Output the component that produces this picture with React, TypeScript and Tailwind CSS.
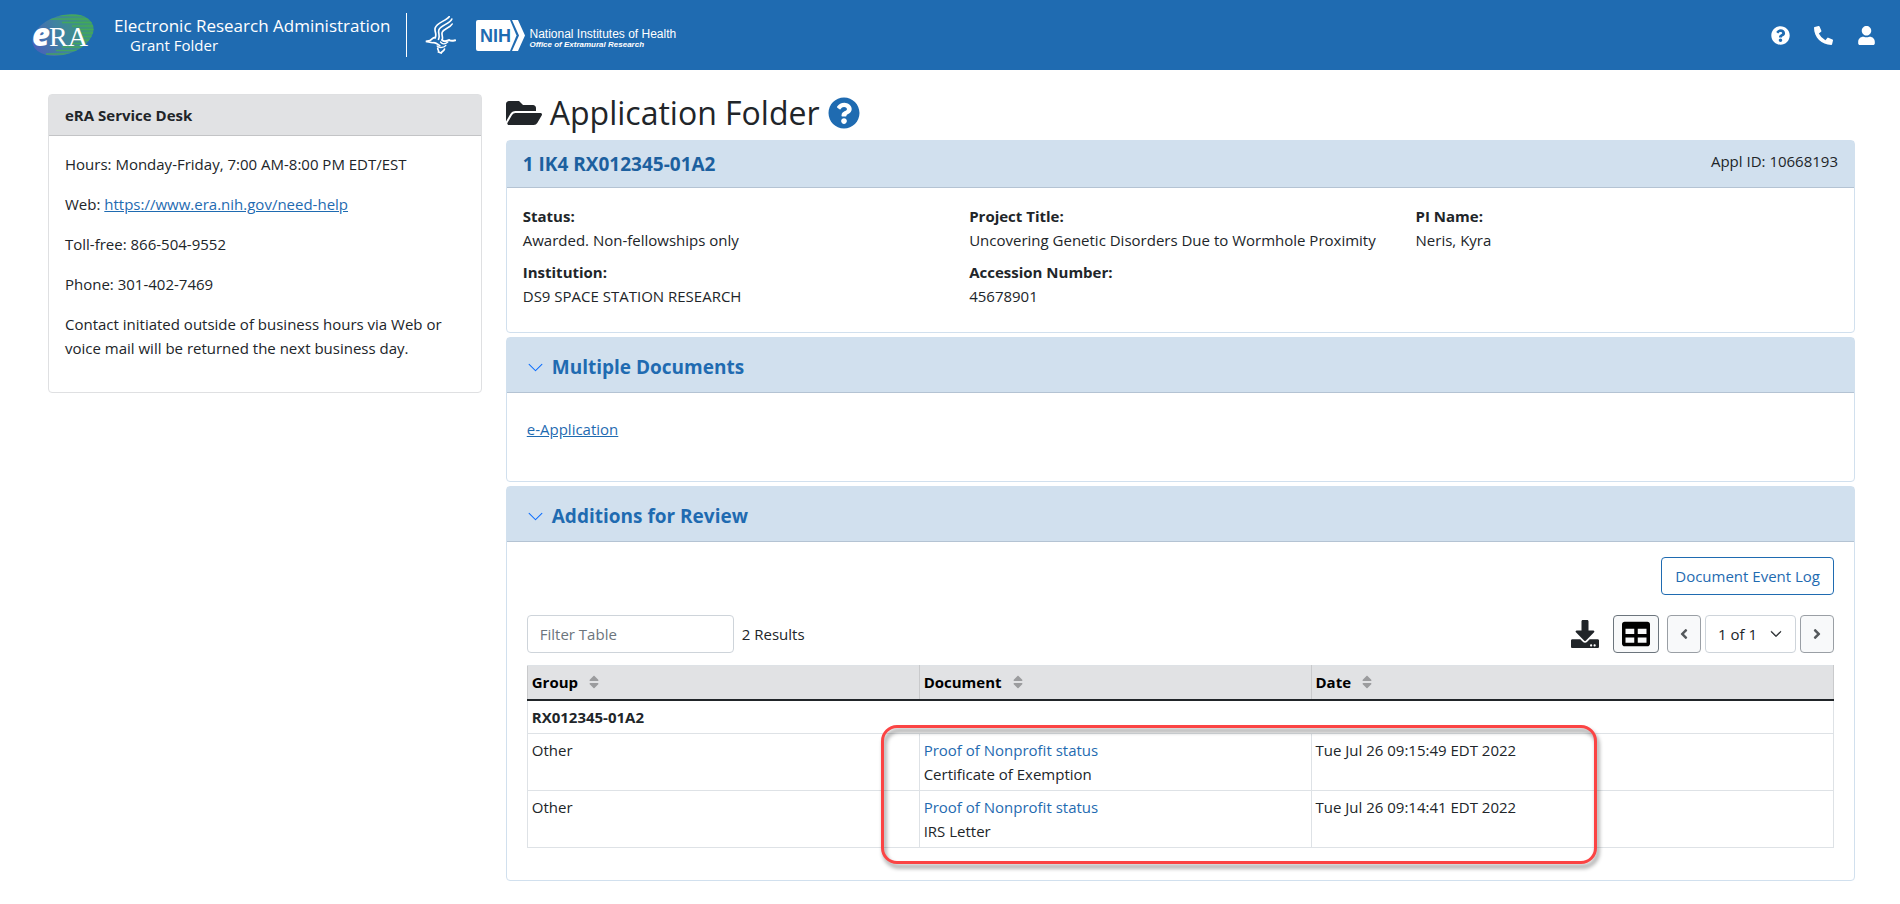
import { useState } from "react";
import type { ReactNode } from "react";
import {
  FaAngleLeft,
  FaAngleRight,
  FaDownload,
  FaFolderOpen,
  FaPhoneAlt,
  FaQuestionCircle,
  FaSort,
  FaTable,
  FaUser,
} from "react-icons/fa";
import { BsChevronDown } from "react-icons/bs";

const documents = [
  {
    group: "Other",
    document: "Proof of Nonprofit status",
    description: "Certificate of Exemption",
    date: "Tue Jul 26 09:15:49 EDT 2022",
  },
  {
    group: "Other",
    document: "Proof of Nonprofit status",
    description: "IRS Letter",
    date: "Tue Jul 26 09:14:41 EDT 2022",
  },
];

function EraLogo() {
  return (
    <svg viewBox="0 0 62 44" className="h-11 w-[62px]" role="img" aria-label="eRA">
      <defs>
        <linearGradient id="era-fill" x1="0" y1="0.6" x2="1" y2="0.3">
          <stop offset="0" stopColor="#4a62b8" />
          <stop offset="0.45" stopColor="#3f83a0" />
          <stop offset="1" stopColor="#3f9a70" />
        </linearGradient>
        <clipPath id="era-clip">
          <ellipse cx="31" cy="22" rx="31.500" ry="19.500" transform="rotate(-18 31 22)" />
        </clipPath>
      </defs>
      <g clipPath="url(#era-clip)">
        <rect width="62" height="44" fill="url(#era-fill)" />
        <path
          d="M20 2.500H62M18 6H62M30 9.500H62M40 13H62M44 16.500H62M48 20H62M48 23.500H62M46 27H62M40 30.500H62M30 34H56M24 37.500H50M14 41H44"
          stroke="#45b04e"
          strokeWidth="1.300"
          opacity="0.75"
        />
      </g>
      <text x="0" y="33" fill="#fff" fontSize="31" fontWeight="800" fontStyle="italic" fontFamily="'Open Sans', sans-serif">
        e
      </text>
      <text x="17" y="33" fill="#fff" fontSize="28" fontFamily="'Liberation Serif', serif">
        RA
      </text>
    </svg>
  );
}

function HhsLogo() {
  return (
    <svg viewBox="76 48 92 114" className="h-[38px] w-[31px]" fill="none" stroke="#fff" strokeLinecap="round" role="img" aria-label="HHS">
      <path d="M148 50C140 62 110 68 106 84C103 96 112 100 106 114" strokeWidth="5" />
      <path d="M156 57C150 72 121 76 117 90C114 101 122 106 116 118" strokeWidth="5" />
      <path d="M157 72C151 84 131 86 127 97C124 106 131 110 127 120" strokeWidth="5" />
      <path d="M106 112C98 112 96 119 90 122L78 124C88 126 94 129 102 128C110 128 114 134 120 137" strokeWidth="5" />
      <path d="M127 120C133 128 142 122 148 120C154 124 160 122 166 121" strokeWidth="6" />
      <path d="M122 126C128 134 136 133 144 126M112 138C120 146 134 142 138 136" strokeWidth="4" />
      <path d="M114 144C112 149 118 150 116 156L124 159C126 153 132 154 134 147" strokeWidth="5" />
    </svg>
  );
}

function NihLogo() {
  return (
    <svg viewBox="0 0 49 31" className="h-[31px] w-[49px]" role="img" aria-label="NIH">
      <path d="M2 0H34L40.500 15.500L34 31H2Q0 31 0 29V2Q0 0 2 0Z" fill="#fff" />
      <path d="M36 0H42L49 15.500L42 31H36L43 15.500Z" fill="#fff" />
      <text x="4" y="22" fontSize="18" fontWeight="700" fill="#1f6bb1" fontFamily="'Liberation Sans', sans-serif">
        NIH
      </text>
    </svg>
  );
}

function Header() {
  return (
    <header className="flex h-[70px] items-center justify-between bg-[#1f6bb1] pr-6 pl-8 text-white">
      <div className="flex items-center">
        <EraLogo />
        <div className="ml-5">
          <div className="text-[17px] leading-5">Electronic Research Administration</div>
          <div className="pl-4 text-[15px] leading-[18px]">Grant Folder</div>
        </div>
        <div className="ml-4 h-11 w-px bg-white" />
        <div className="ml-[18px]">
          <HhsLogo />
        </div>
        <div className="ml-5 flex items-center gap-1">
          <NihLogo />
          <div className="pt-2 font-['Liberation_Sans',Arial,sans-serif]">
            <div className="text-xs leading-3">National Institutes of Health</div>
            <div className="text-[8px] leading-[10px] font-bold italic">Office of Extramural Research</div>
          </div>
        </div>
      </div>
      <nav className="flex items-center gap-6">
        <button type="button" aria-label="Help">
          <FaQuestionCircle className="size-[19px]" />
        </button>
        <button type="button" aria-label="Contact">
          <FaPhoneAlt className="size-[19px]" />
        </button>
        <button type="button" aria-label="Account">
          <FaUser className="size-[19px]" />
        </button>
      </nav>
    </header>
  );
}

function ServiceDesk() {
  return (
    <aside className="rounded-[4px] border border-[#dfe0e2]">
      <h2 className="border-b border-[#c3c4c6] bg-[#e1e2e4] px-4 py-2 font-bold">eRA Service Desk</h2>
      <div className="space-y-4 px-4 pt-4 pb-8">
        <p>Hours: Monday-Friday, 7:00 AM-8:00 PM EDT/EST</p>
        <p>
          Web:{" "}
          <a href="https://www.era.nih.gov/need-help" className="text-[#1f6bb1] underline">
            https://www.era.nih.gov/need-help
          </a>
        </p>
        <p>Toll-free: 866-504-9552</p>
        <p>Phone: 301-402-7469</p>
        <p>Contact initiated outside of business hours via Web or voice mail will be returned the next business day.</p>
      </div>
    </aside>
  );
}

function Field({ label, value }: { label: string; value: string }) {
  return (
    <div>
      <dt className="font-bold">{label}</dt>
      <dd>{value}</dd>
    </div>
  );
}

function Panel({ title, children }: { title: string; children: ReactNode }) {
  const [open, setOpen] = useState(true);

  return (
    <section className="rounded-[4px] border border-[#d1e0ee]">
      <h2 className="border-b border-[#b4c3d3] bg-[#d1e0ee]">
        <button
          type="button"
          aria-expanded={open}
          onClick={() => setOpen(!open)}
          className="flex h-[54px] w-full items-center gap-2 px-5 pt-1 text-[19px] font-bold text-[#1f6bb1]"
        >
          <BsChevronDown className="size-[17px] text-[#0d6efd]" />
          {title}
        </button>
      </h2>
      {open && children}
    </section>
  );
}

function SortHeader({ label, width }: { label: string; width: string }) {
  return (
    <th
      className={`border border-[#c9cacc] border-t-[#dee2e6] border-b-2 border-b-[#212529] px-1 pt-1 pb-[5px] text-left font-bold text-black ${width}`}
    >
      <button type="button" className="flex items-center gap-2">
        {label}
        <FaSort className="size-4 text-[#9b9c9e]" />
      </button>
    </th>
  );
}

function DocumentTable() {
  return (
    <div className="relative mt-3">
      <table className="w-full table-fixed border-collapse border border-[#dee2e6]">
        <thead className="bg-[#e1e2e4]">
          <tr>
            <SortHeader label="Group" width="w-[30%]" />
            <SortHeader label="Document" width="w-[30%]" />
            <SortHeader label="Date" width="w-[40%]" />
          </tr>
        </thead>
        <tbody>
          <tr>
            <td colSpan={3} className="border border-[#dee2e6] px-1 py-1 font-bold">
              RX012345-01A2
            </td>
          </tr>
          {documents.map((row) => (
            <tr key={row.date} className="align-top">
              <td className="border border-[#dee2e6] p-1">{row.group}</td>
              <td className="border border-[#dee2e6] p-1">
                <a href="#" className="text-[#1f6bb1]">
                  {row.document}
                </a>
                <div>{row.description}</div>
              </td>
              <td className="border border-[#dee2e6] p-1">{row.date}</td>
            </tr>
          ))}
        </tbody>
      </table>
      {/* callout around the new documents */}
      <div className="pointer-events-none absolute top-[60px] left-[27.1%] h-[139px] w-[54.8%] rounded-2xl border-3 border-[#fb4444] drop-shadow-[2px_4px_2px_rgba(0,0,0,0.45)]" />
    </div>
  );
}

export default function App() {
  return (
    <div className="min-h-screen bg-white font-['Open_Sans','Noto_Sans',sans-serif] text-[15px] leading-6 text-[#212529]">
      <Header />
      <div className="grid grid-cols-4 items-start gap-6 pt-6 pr-[45px] pb-6 pl-12">
        <ServiceDesk />
        <main className="col-span-3">
          <h1 className="mb-2 flex h-[38px] items-center gap-2 text-[32px] font-medium">
            <FaFolderOpen className="h-8 w-9" />
            Application Folder
            <button type="button" aria-label="Help with this page">
              <FaQuestionCircle className="size-8 text-[#1f6bb1]" />
            </button>
          </h1>

          <div className="space-y-1">
            <section className="rounded-[4px] border border-[#d1e0ee]">
              <div className="flex items-start justify-between border-b border-[#b4c3d3] bg-[#d1e0ee] px-4 py-2">
                <h2 className="text-[19px] leading-[30px] font-bold text-[#1c609f]">1 IK4 RX012345-01A2</h2>
                <span>Appl ID: 10668193</span>
              </div>
              <dl className="grid grid-cols-3 gap-2 pt-4 pb-6 pl-4">
                <Field label="Status:" value="Awarded. Non-fellowships only" />
                <Field label="Project Title:" value="Uncovering Genetic Disorders Due to Wormhole Proximity" />
                <Field label="PI Name:" value="Neris, Kyra" />
                <Field label="Institution:" value="DS9 SPACE STATION RESEARCH" />
                <Field label="Accession Number:" value="45678901" />
              </dl>
            </section>

            <Panel title="Multiple Documents">
              <div className="px-5 pt-6 pb-10">
                <a href="#" className="text-[#1f6bb1] underline">
                  e-Application
                </a>
              </div>
            </Panel>

            <Panel title="Additions for Review">
              <div className="px-5 pt-[15px] pb-8">
                <div className="flex justify-end">
                  <button type="button" className="h-[38px] rounded-[4px] border border-[#1f6bb1] px-[13px] text-[#1f6bb1]">
                    Document Event Log
                  </button>
                </div>
                <div className="mt-5 flex items-center justify-between">
                  <div className="flex items-center gap-2">
                    <input
                      type="text"
                      placeholder="Filter Table"
                      aria-label="Filter Table"
                      className="h-[38px] w-[207px] rounded-[4px] border border-[#ced4da] px-3 placeholder:text-[#6c757d]"
                    />
                    <span>2 Results</span>
                  </div>
                  <div className="flex items-center gap-1">
                    <button type="button" aria-label="Download" className="mr-2.5">
                      <FaDownload className="size-7" />
                    </button>
                    <button
                      type="button"
                      aria-label="Choose columns"
                      className="mr-1 flex h-[38px] w-[46px] items-center justify-center rounded-[4px] border border-[#6c757d] bg-[#f8f9fa] text-black"
                    >
                      <FaTable className="size-7" />
                    </button>
                    <button
                      type="button"
                      aria-label="Previous page"
                      className="flex h-[38px] w-[34px] items-center justify-center rounded-[4px] border border-[#9a9fa5] bg-[#f8f9fa] text-[#55595c]"
                    >
                      <FaAngleLeft className="size-4" />
                    </button>
                    <div className="relative">
                      <select
                        aria-label="Page"
                        className="h-[38px] w-[91px] appearance-none rounded-[4px] border border-[#ced4da] bg-white pl-3"
                      >
                        <option>1 of 1</option>
                      </select>
                      <BsChevronDown className="pointer-events-none absolute top-[13px] right-3.5 size-3 stroke-1" />
                    </div>
                    <button
                      type="button"
                      aria-label="Next page"
                      className="flex h-[38px] w-[34px] items-center justify-center rounded-[4px] border border-[#9a9fa5] bg-[#f8f9fa] text-[#55595c]"
                    >
                      <FaAngleRight className="size-4" />
                    </button>
                  </div>
                </div>
                <DocumentTable />
              </div>
            </Panel>
          </div>
        </main>
      </div>
    </div>
  );
}
